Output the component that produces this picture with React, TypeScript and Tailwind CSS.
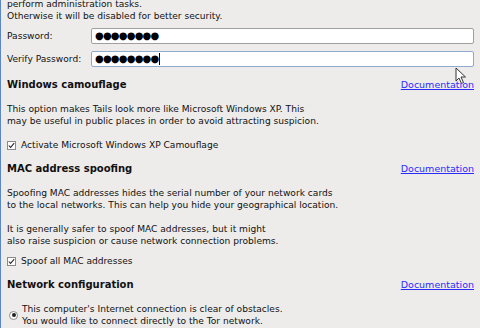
import { ReactElement } from 'react';

const font = { fontFamily: '"DejaVu Sans", sans-serif' };

const Doc = (): ReactElement => (
  <a href="#" className="text-[#2b2bff] underline text-[9.5px] leading-[12px]">
    Documentation
  </a>
);

const Section = ({ title }: { title: string }): ReactElement => (
  <div className="flex items-center justify-between h-[12px]">
    <span className="font-bold text-[10px] text-[#111]">{title}</span>
    <Doc />
  </div>
);

const Check = ({ label }: { label: string }): ReactElement => (
  <div className="flex items-center gap-[5px] h-[12px]">
    <span className="w-[9px] h-[9px] border border-[#8a8a8a] bg-white flex items-center justify-center">
      <svg viewBox="0 0 9 9" className="w-[7px] h-[7px]">
        <path d="M1 4.5 L3.3 7 L8 1.5" stroke="#222" strokeWidth="1.3" fill="none" />
      </svg>
    </span>
    <span>{label}</span>
  </div>
);

const Field = ({ label, focused }: { label: string; focused?: boolean }): ReactElement => (
  <div className="flex items-center h-[16px]">
    <span className="w-[84px] shrink-0">{label}</span>
    <div
      className={`flex-1 h-[16px] bg-white rounded-[2px] border flex items-center pl-[3px] ${
        focused ? 'border-[#8fa9cf]' : 'border-[#a09f9d]'
      }`}
    >
      <span className="text-[10px] tracking-[-0.8px] text-black">●●●●●●●●</span>
      {focused && <span className="w-px h-[12px] bg-black ml-[1px]" />}
    </div>
  </div>
);

export default function App(): ReactElement {
  return (
    <div
      className="relative w-[480px] h-[328px] overflow-hidden bg-[#edeceb] border-l border-[#5b87c9] text-[9.1px] leading-[12px] text-[#111]"
      style={font}
    >
      <div className="flex flex-col px-[6px] -mt-[2px]">
        <div>perform administration tasks.</div>
        <div>Otherwise it will be disabled for better security.</div>
        <div className="flex flex-col gap-[7px] mt-[6px]">
          <Field label="Password:" />
          <Field label="Verify Password:" focused />
        </div>
        <div className="mt-[12px]">
          <Section title="Windows camouflage" />
        </div>
        <div className="mt-[12px]">
          <div>This option makes Tails look more like Microsoft Windows XP. This</div>
          <div>may be useful in public places in order to avoid attracting suspicion.</div>
        </div>
        <div className="mt-[12px]">
          <Check label="Activate Microsoft Windows XP Camouflage" />
        </div>
        <div className="mt-[12px]">
          <Section title="MAC address spoofing" />
        </div>
        <div className="mt-[12px]">
          <div>Spoofing MAC addresses hides the serial number of your network cards</div>
          <div>to the local networks. This can help you hide your geographical location.</div>
          <div className="h-[12px]" />
          <div>It is generally safer to spoof MAC addresses, but it might</div>
          <div>also raise suspicion or cause network connection problems.</div>
        </div>
        <div className="mt-[8px]">
          <Check label="Spoof all MAC addresses" />
        </div>
        <div className="mt-[12px]">
          <Section title="Network configuration" />
        </div>
        <div className="mt-[12px] flex items-center gap-[4px]">
          <span className="w-[9px] h-[9px] rounded-full border border-[#8a8a8a] bg-white flex items-center justify-center ml-[2px]">
            <span className="w-[4px] h-[4px] rounded-full bg-[#222]" />
          </span>
          <div>
            <div>This computer's Internet connection is clear of obstacles.</div>
            <div>You would like to connect directly to the Tor network.</div>
          </div>
        </div>
      </div>
      <svg className="absolute left-[454px] top-[67px]" width="12" height="18" viewBox="0 0 12 18">
        <path d="M1 1 L1 14 L4 11 L6.5 16.5 L8.5 15.5 L6 10 L10.5 10 Z" fill="#fff" stroke="#333" strokeWidth="1" />
      </svg>
    </div>
  );
}
